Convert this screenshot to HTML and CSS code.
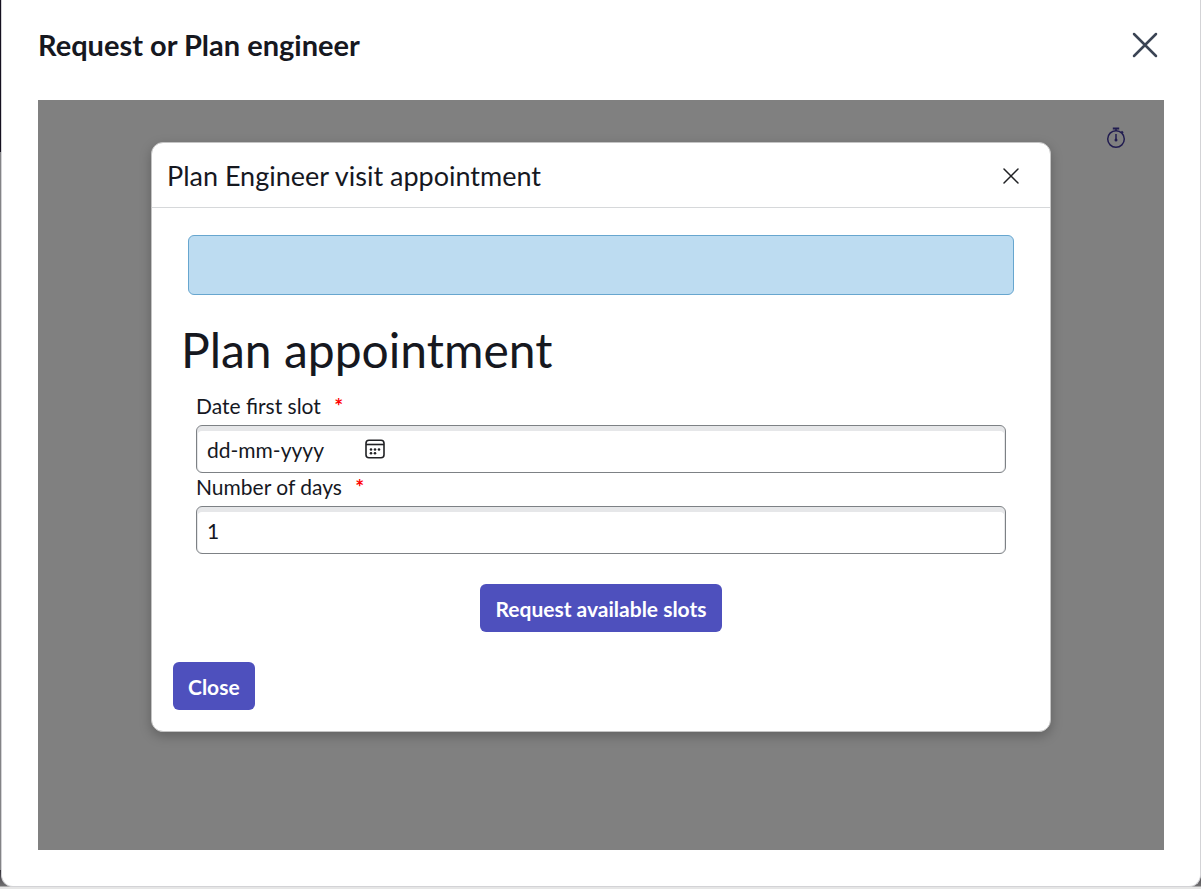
FILE: index.html
```html
<!DOCTYPE html>
<html lang="en">
<head>
<meta charset="utf-8">
<meta name="viewport" content="width=device-width, initial-scale=1">
<title>Request or Plan engineer</title>
<link rel="stylesheet" href="styles.css">
</head>
<body>
<div class="backdrop">
  <main class="window" role="dialog" aria-labelledby="window-title">
    <header class="window-header">
      <h1 class="window-title" id="window-title">Request or Plan engineer</h1>
      <button class="icon-button" type="button" aria-label="Close window">
        <svg width="26" height="26" viewBox="0 0 26 26" fill="none" stroke="#3b4454" stroke-width="2.5" stroke-linecap="round"><path d="M2 2l22 22M24 2L2 24"/></svg>
      </button>
    </header>
    <div class="stage">
      <button class="icon-button timer" type="button" aria-label="Timer">
        <svg width="20" height="22" viewBox="0 0 20 22" fill="none" stroke="#211c50" stroke-width="1.5"><circle cx="10" cy="12" r="8.3"/><path d="M6.800 1.500h6.400" stroke-width="2"/><path d="M10 1.500v2.500M15.500 4.300l1.700 1.500M10 7v6"/><circle cx="10" cy="13" r="1.500" fill="#211c50" stroke="none"/></svg>
      </button>
      <section class="modal" role="dialog" aria-labelledby="modal-title">
        <header class="modal-header">
          <h2 class="modal-title" id="modal-title">Plan Engineer visit appointment</h2>
          <button class="icon-button" type="button" aria-label="Close appointment">
            <svg width="16" height="16" viewBox="0 0 16 16" fill="none" stroke="#202124" stroke-width="1.500" stroke-linecap="round"><path d="M1 1l14 14M15 1L1 15"/></svg>
          </button>
        </header>
        <form class="modal-body">
          <div class="notice" role="status"></div>
          <h3 class="form-title">Plan appointment</h3>
          <div class="fields">
            <label class="label" for="first-slot">Date first slot <span class="required">*</span></label>
            <div class="control">
              <input class="input date-input" id="first-slot" type="text" placeholder="dd-mm-yyyy" size="10" required>
              <button class="icon-button" type="button" aria-label="Choose date">
                <svg width="20" height="20" viewBox="0 0 20 20" fill="none" stroke="#202124" stroke-width="1.600"><rect x="1" y="1.200" width="18" height="17.600" rx="3"/><path d="M1 5.500h18"/><g fill="#202124" stroke="none"><circle cx="6" cy="10.500" r="1.300"/><circle cx="10" cy="10.500" r="1.300"/><circle cx="14" cy="10.500" r="1.300"/><circle cx="6" cy="14.300" r="1.300"/><circle cx="10" cy="14.300" r="1.300"/></g></svg>
              </button>
            </div>
            <label class="label" for="days">Number of days <span class="required">*</span></label>
            <div class="control">
              <input class="input" id="days" type="text" inputmode="numeric" value="1" required>
            </div>
          </div>
          <div class="request-row">
            <button class="button" type="button">Request available slots</button>
          </div>
          <button class="button" type="button">Close</button>
        </form>
      </section>
    </div>
  </main>
</div>
</body>
</html>
```
FILE: styles.css
```css
* { box-sizing: border-box; }
body {
  margin: 0;
  color: #16181f;
  font-family: Lato, "Liberation Sans", sans-serif;
  font-size: 21px;
}
h1, h2, h3 { margin: 0; }
button, input { font: inherit; color: inherit; }
svg { display: block; }
.backdrop {
  display: flex;
  min-height: 100vh;
  padding: 0 0 2px 1px;
  background: linear-gradient(#15111f 152px, #838386 152px, #838386 870px, #343139 870px, #706f71 886px, #e6e6e6 887px);
}
.window {
  flex: 1;
  display: flex;
  flex-direction: column;
  min-width: 0;
  padding: 0 36px 36px;
  background: #fff;
  border: 1px solid #d3d3d6;
  border-top: 0;
  border-radius: 0 0 12px 12px;
}
.window-header {
  display: flex;
  align-items: center;
  justify-content: space-between;
  height: 100px;
  padding: 0 6px 10px 0;
}
.window-title {
  font-size: 29px;
  font-weight: 700;
  line-height: 36px;
}
.icon-button {
  padding: 0;
  background: none;
  border: 0;
  cursor: pointer;
}
.stage {
  position: relative;
  flex: 1;
  padding: 42px 24px;
  background: #808080;
}
.timer {
  position: absolute;
  top: 27px;
  right: 38px;
}
.modal {
  max-width: 900px;
  margin: 0 auto;
  background: #fff;
  border: 1px solid #c4c4c4;
  border-radius: 12px;
  box-shadow: 0 4px 12px rgba(0, 0, 0, 0.25);
}
.modal-header {
  display: flex;
  align-items: center;
  justify-content: space-between;
  height: 65px;
  padding: 1px 31px 0 15px;
  border-bottom: 1px solid #d6d8da;
}
.modal-title {
  font-size: 27px;
  font-weight: 400;
  line-height: 32px;
}
.modal-body { padding: 27px 21px 21px; }
.notice {
  height: 60px;
  margin: 0 15px;
  background: #bddcf1;
  border: 1px solid #67a6cf;
  border-radius: 6px;
}
.form-title {
  margin: 27px 0 14px 8px;
  font-size: 48px;
  font-weight: 400;
  line-height: 56px;
}
.fields { margin: 0 23px 30px; }
.label {
  display: block;
  height: 33px;
  line-height: 27px;
}
.required {
  margin-left: 8px;
  color: #f00;
  font-weight: 700;
}
.control {
  display: flex;
  align-items: center;
  height: 48px;
  border: 1px solid #7d8185;
  border-radius: 6px;
  box-shadow: inset 0 5px 0 #e6e7e9, inset -1px 0 0 #e6e7e9, inset 1px 0 0 #e6e7e9;
}
.input {
  flex: 1;
  min-width: 0;
  height: 100%;
  padding: 0 10px;
  background: none;
  border: 0;
}
.input::placeholder {
  color: inherit;
  opacity: 1;
}
.date-input { flex: 0 0 168px; }
.request-row {
  display: flex;
  justify-content: center;
  margin-bottom: 30px;
}
.button {
  height: 48px;
  padding: 0 15px;
  color: #fff;
  font-weight: 700;
  background: #4e50bd;
  border: 0;
  border-radius: 6px;
  cursor: pointer;
}
```
